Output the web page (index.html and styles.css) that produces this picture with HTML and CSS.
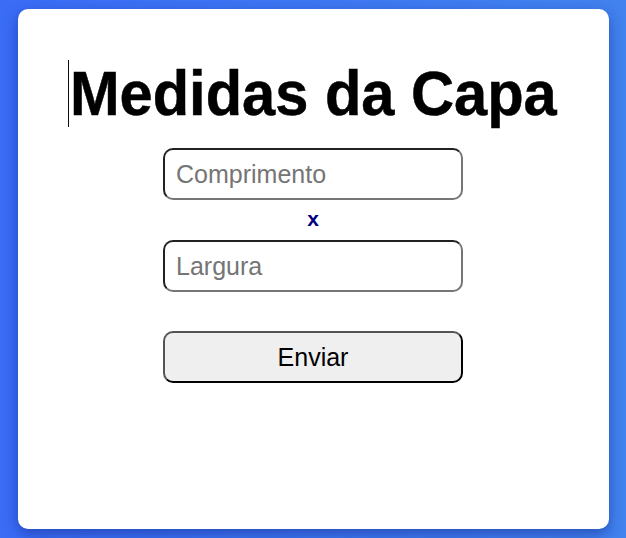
FILE: index.html
```html
<!DOCTYPE html>
<html lang="pt">
<head>
<meta charset="utf-8">
<title>Medidas da Capa</title>
<link rel="stylesheet" href="styles.css">
</head>
<body>
<main class="card">
  <h1 class="title"><span class="caret"></span>Medidas da Capa</h1>
  <form class="form">
    <input class="field" type="text" placeholder="Comprimento">
    <div class="times">x</div>
    <input class="field" type="text" placeholder="Largura">
    <button class="submit" type="button">Enviar</button>
  </form>
</main>
</body>
</html>
```
FILE: styles.css
```css
html, body {
  margin: 0;
  padding: 0;
}
body {
  height: 100vh;
  display: flex;
  align-items: center;
  justify-content: center;
  background: linear-gradient(to right, #3a6cf6, #4283ef);
  font-family: "Liberation Sans", Arial, sans-serif;
}
.card {
  width: 591px;
  height: 520px;
  box-sizing: border-box;
  background: #fff;
  border-radius: 10px;
  box-shadow: 0 5px 14px rgba(20, 40, 140, 0.55);
  padding-top: 51px;
  display: flex;
  flex-direction: column;
  align-items: center;
}
.title {
  margin: 0;
  font-size: 63px;
  line-height: 67px;
  font-weight: bold;
  color: #000;
  -webkit-text-stroke: 0.5px #000;
  transform: scaleX(0.946);
  position: relative;
}
.caret {
  position: absolute;
  left: -2px;
  top: 0;
  width: 1px;
  height: 67px;
  background: #000;
}
.form {
  margin-top: 21px;
  display: flex;
  flex-direction: column;
  align-items: center;
}
.field {
  width: 300px;
  height: 52px;
  box-sizing: border-box;
  padding: 0 11px;
  border: 2px inset #767676;
  border-radius: 10px;
  font-family: "Liberation Sans", Arial, sans-serif;
  font-size: 25px;
  color: #000;
  background: #fff;
  outline: none;
}
.field::placeholder {
  color: #757575;
}
.times {
  height: 40px;
  line-height: 37px;
  font-size: 21px;
  font-weight: bold;
  color: #000080;
}
.submit {
  margin-top: 39px;
  width: 300px;
  height: 52px;
  box-sizing: border-box;
  border: 2px outset #000;
  border-radius: 10px;
  background: #efefef;
  font-family: "Liberation Sans", Arial, sans-serif;
  font-size: 25px;
  color: #000;
  padding: 0;
}
```
